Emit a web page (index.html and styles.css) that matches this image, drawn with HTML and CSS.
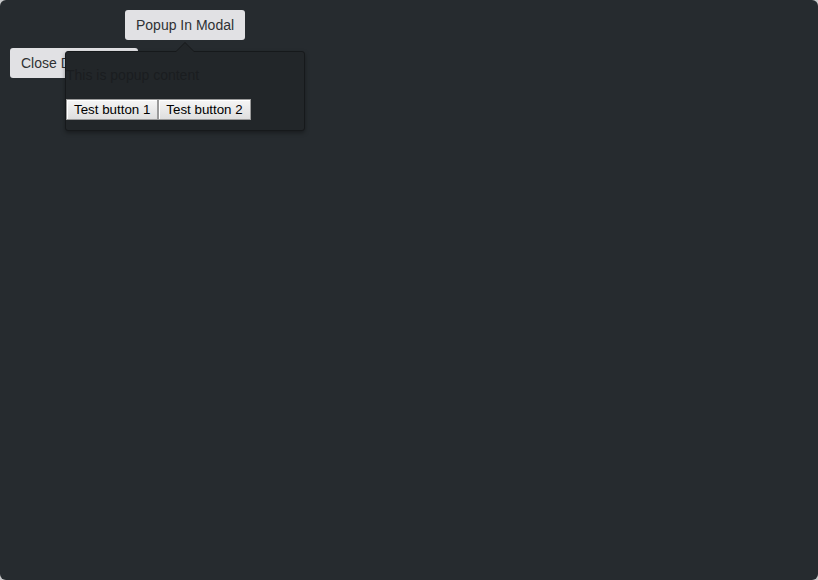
FILE: index.html
```html
<!DOCTYPE html>
<html>
<head>
<meta charset="utf-8">
<link rel="stylesheet" href="styles.css">
</head>
<body>
<div class="modal">
  <button class="btn btn-popup">Popup In Modal</button>
  <button class="btn">Close Dialog box</button>
  <div class="popup">
    <span class="arrow"></span>
    <p class="popup-text">This is popup content</p>
    <div class="popup-buttons">
      <button class="native">Test button 1</button>
      <button class="native">Test button 2</button>
    </div>
  </div>
</div>
</body>
</html>
```
FILE: styles.css
```css
html, body {
  margin: 0;
  padding: 0;
  background: #c9cacb;
}
.modal {
  position: relative;
  box-sizing: border-box;
  width: 818px;
  height: 580px;
  border-radius: 6px;
  background: #262b2f;
  padding: 10px;
  display: flex;
  flex-direction: column;
  align-items: flex-start;
  gap: 8px;
  font-family: "Liberation Sans", Arial, sans-serif;
}
.btn {
  height: 30px;
  padding: 0 11px;
  border: none;
  border-radius: 3px;
  background: #e1e1e4;
  color: #2f3133;
  font-family: "Liberation Sans", Arial, sans-serif;
  font-size: 14px;
}
.btn-popup {
  margin-left: 115px;
}
.popup {
  position: absolute;
  left: 65px;
  top: 51px;
  width: 238px;
  border: 1px solid #16191b;
  border-radius: 3px;
  background: #222629;
  box-shadow: 0 2px 4px rgba(0, 0, 0, 0.35);
  padding-bottom: 10px;
}
.arrow {
  position: absolute;
  left: 109px;
  top: -10px;
  width: 0;
  height: 0;
  border-left: 10px solid transparent;
  border-right: 10px solid transparent;
  border-bottom: 10px solid #16191b;
}
.arrow::after {
  content: "";
  position: absolute;
  left: -9px;
  top: 1px;
  width: 0;
  height: 0;
  border-left: 9px solid transparent;
  border-right: 9px solid transparent;
  border-bottom: 9px solid #222629;
}
.popup-text {
  margin: 15px 0 16px;
  font-size: 14px;
  line-height: 16px;
  color: #1a1d20;
}
.popup-buttons {
  display: flex;
}
.native {
  box-sizing: border-box;
  height: 21px;
  margin: 0;
  padding: 1px 7px;
  font-family: "Liberation Sans", Arial, sans-serif;
  font-size: 13.333px;
  color: #000;
  background: linear-gradient(#f6f6f6, #dedede);
  border: 1px solid #9a9a9a;
  box-shadow: inset 1px 1px 0 #ffffff;
}
```
